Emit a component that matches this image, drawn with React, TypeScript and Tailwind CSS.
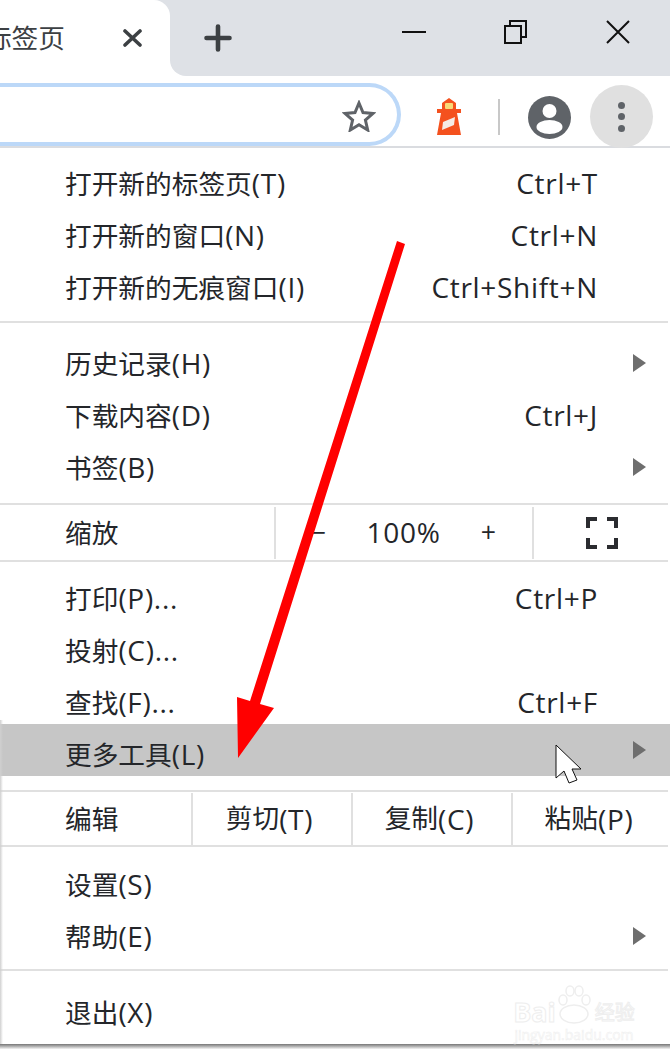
const FONT = "font-['Open_Sans','Noto_Sans_CJK_SC',sans-serif]";

function Divider() {
  return <div className="h-[2px] w-[668px] bg-[#e0e0e0]" />;
}

// latin runs sit a little larger than the CJK glyphs in this menu font
function Mixed({ text }: { text: string }) {
  return (
    <>
      {text.split(/([\x00-\x7f]+)/).map((part, i) =>
        /^[\x00-\x7f]+$/.test(part) ? (
          <span key={i} className="text-[28px] tracking-[0.7px]">
            {part}
          </span>
        ) : (
          <span key={i}>{part}</span>
        )
      )}
    </>
  );
}

function Triangle() {
  return (
    <svg width="13" height="18" viewBox="0 0 13 18" aria-hidden>
      <path d="M0 0 L13 9 L0 18 Z" fill="#6e6e6e" />
    </svg>
  );
}

function MenuRow({ label, shortcut, sub }: { label: string; shortcut?: string; sub?: boolean }) {
  return (
    <div className="flex h-[52px] items-center justify-between pl-[65px]">
      <span>
        <Mixed text={label} />
      </span>
      {shortcut && (
        <span className="pr-[72px]">
          <Mixed text={shortcut} />
        </span>
      )}
      {sub && (
        <span className="pr-[24px]">
          <Triangle />
        </span>
      )}
    </div>
  );
}

function Lighthouse() {
  return (
    <svg width="26" height="38" viewBox="0 0 26 38" aria-hidden>
      <path d="M13 0 L20 5 L20 11 L25 11 L25 15 L21 15 L25 37 L1 37 L5 15 L1 15 L1 11 L6 11 L6 5 Z" fill="#f4511e" />
      <rect x="9" y="5" width="8" height="6" rx="1" fill="#f9d976" />
      <path d="M7 24 L19 19 L18 27 L6 32 Z" fill="#f5ece6" />
    </svg>
  );
}

function Avatar() {
  return (
    <svg width="43" height="43" viewBox="0 0 43 43" aria-hidden>
      <circle cx="21.5" cy="21.5" r="21.5" fill="#5f6368" />
      <circle cx="21.5" cy="15" r="7" fill="#ffffff" />
      <ellipse cx="21.5" cy="31" rx="13" ry="7" fill="#ffffff" />
    </svg>
  );
}

function Star() {
  return (
    <svg width="34" height="32" viewBox="0 0 34 32" aria-hidden>
      <path
        d="M17 3 L21 12.5 L31 13.4 L23.4 20 L25.7 30 L17 24.7 L8.3 30 L10.6 20 L3 13.4 L13 12.5 Z"
        fill="none"
        stroke="#5f6368"
        strokeWidth="3"
      />
    </svg>
  );
}

function FullscreenIcon() {
  return (
    <svg width="32" height="32" viewBox="0 0 32 32" aria-hidden>
      <path d="M0 11 V0 H11 V4 H4 V11 Z M21 0 H32 V11 H28 V4 H21 Z M0 21 H4 V28 H11 V32 H0 Z M28 21 H32 V32 H21 V28 H28 Z" fill="#2b2c30" />
    </svg>
  );
}

function WindowButtons() {
  return (
    <div className="flex pt-[19px]">
      <svg width="24" height="26" viewBox="0 0 24 26" className="ml-[170px]" aria-hidden>
        <path d="M0 13 H24" stroke="#111111" strokeWidth="2" />
      </svg>
      <svg width="24" height="26" viewBox="0 0 24 26" className="ml-[78px]" aria-hidden>
        <path d="M1 7 H17 V24 H1 Z M6 7 V2 H22 V18 H17" fill="none" stroke="#111111" strokeWidth="2" />
      </svg>
      <svg width="26" height="26" viewBox="0 0 26 26" className="ml-[77px]" aria-hidden>
        <path d="M2 2 L24 24 M24 2 L2 24" stroke="#111111" strokeWidth="2" />
      </svg>
    </div>
  );
}

function Watermark() {
  return (
    <div className="absolute left-[513px] top-[985px] flex w-[122px] flex-col items-center text-transparent [-webkit-text-stroke:1px_#eeeeee]">
      <div className="flex h-[40px] items-end leading-none">
        <span className="text-[27px] font-bold">Bai</span>
        <svg width="36" height="40" viewBox="0 0 36 40" aria-hidden>
          <g fill="none" stroke="#eeeeee" strokeWidth="1.5">
            <ellipse cx="7" cy="15" rx="4" ry="5" />
            <ellipse cx="14" cy="6" rx="4" ry="5" />
            <ellipse cx="23" cy="6" rx="4" ry="5" />
            <ellipse cx="30" cy="15" rx="4" ry="5" />
            <ellipse cx="18" cy="29" rx="14" ry="9" />
          </g>
        </svg>
        <span className="ml-[3px] text-[20px] leading-[24px]">经验</span>
      </div>
      <span className="mt-[1px] text-[14px] leading-[17px] [-webkit-text-stroke:0.5px_#eeeeee]">jingyan.baidu.com</span>
    </div>
  );
}

export default function App() {
  return (
    <div className={`relative h-[1057px] w-[670px] overflow-hidden bg-white text-[26.7px] leading-none text-[#24262a] ${FONT}`}>
      {/* tab strip */}
      <div className="flex h-[76px] bg-white">
        <div className="w-[170px] bg-[#dee1e6]">
          <div className="flex h-full items-center justify-end rounded-tr-[16px] bg-white pr-[28px]">
            <span className="mr-[58px] whitespace-nowrap text-[#3c4043]">新标签页</span>
            <svg width="19" height="18" viewBox="0 0 19 18" className="shrink-0" aria-hidden>
              <path d="M2 2 L17 16 M17 2 L2 16" stroke="#3c4043" strokeWidth="3.6" strokeLinecap="round" />
            </svg>
          </div>
        </div>
        <div className="flex flex-1 rounded-bl-[16px] bg-[#dee1e6]">
          <div className="flex w-[62px] items-center justify-end">
            <svg width="28" height="28" viewBox="0 0 28 28" aria-hidden>
              <path d="M14 2.5 V25.5 M2.5 14 H25.5" stroke="#3c4043" strokeWidth="4.6" strokeLinecap="round" />
            </svg>
          </div>
          <div className="flex-1">
            <WindowButtons />
          </div>
        </div>
      </div>

      {/* toolbar */}
      <div className="flex h-[72px] items-start border-b-2 border-[#dadce0]">
        <div className="mt-[7px] flex h-[63px] w-[401px] shrink-0 items-center justify-end rounded-r-[32px] border-y-[4px] border-r-[4px] border-[#bcd8f8] pr-[21px]">
          <span className="mt-[3px]">
            <Star />
          </span>
        </div>
        <div className="ml-[35px] mt-[22px]">
          <Lighthouse />
        </div>
        <div className="ml-[36px] mt-[23px] h-[36px] w-[2px] bg-[#c8c8c8]" />
        <div className="ml-[28px] mt-[20px]">
          <Avatar />
        </div>
        <div className="ml-[19px] mt-[9px] flex h-[63px] w-[63px] flex-col items-center justify-center gap-[4.5px] rounded-full bg-[#e0e0e0]">
          <span className="h-[7px] w-[7px] rounded-full bg-[#5f6368]" />
          <span className="h-[7px] w-[7px] rounded-full bg-[#5f6368]" />
          <span className="h-[7px] w-[7px] rounded-full bg-[#5f6368]" />
        </div>
      </div>

      {/* menu */}
      <div className="pt-[9px]">
        <MenuRow label="打开新的标签页(T)" shortcut="Ctrl+T" />
        <MenuRow label="打开新的窗口(N)" shortcut="Ctrl+N" />
        <MenuRow label="打开新的无痕窗口(I)" shortcut="Ctrl+Shift+N" />
        <div className="h-[8px]" />
        <Divider />
        <div className="h-[14px]" />
        <MenuRow label="历史记录(H)" sub />
        <MenuRow label="下载内容(D)" shortcut="Ctrl+J" />
        <MenuRow label="书签(B)" sub />
        <div className="h-[10px]" />
        <Divider />
        <div className="flex h-[55px] items-center">
          <span className="mt-[2px] w-[274px] pl-[65px]">缩放</span>
          <div className="flex h-[52px] w-[260px] items-center border-x-2 border-[#e0e0e0] text-center">
            <span className="w-[85px]">−</span>
            <span className="-mt-[2px] w-[85px] text-[28px] tracking-[0.7px]">100%</span>
            <span className="w-[85px]">+</span>
          </div>
          <div className="flex flex-1 justify-center pr-[1px]">
            <FullscreenIcon />
          </div>
        </div>
        <Divider />
        <div className="h-[10px]" />
        <MenuRow label="打印(P)..." shortcut="Ctrl+P" />
        <MenuRow label="投射(C)..." />
        <MenuRow label="查找(F)..." shortcut="Ctrl+F" />
        <div className="-mt-[4px] flex h-[52px] items-center justify-between bg-[#c6c6c6] pl-[65px] pt-[8px]">
          <span>
            <Mixed text="更多工具(L)" />
          </span>
          <span className="-mt-[8px] pr-[24px]">
            <Triangle />
          </span>
        </div>
        <div className="h-[14px]" />
        <Divider />
        <div className="flex h-[53px] items-center">
          <span className="mt-[1px] w-[191px] pl-[65px]">编辑</span>
          <div className="flex h-[52px] flex-1 items-center text-center">
            <span className="flex h-full w-[160px] items-center justify-center border-l-2 border-[#e0e0e0] pr-[5px]">
              <Mixed text="剪切(T)" />
            </span>
            <span className="flex h-full w-[160px] items-center justify-center border-l-2 border-[#e0e0e0] pr-[5px]">
              <Mixed text="复制(C)" />
            </span>
            <span className="flex h-full w-[159px] items-center justify-center border-l-2 border-[#e0e0e0] pr-[5px]">
              <Mixed text="粘贴(P)" />
            </span>
          </div>
        </div>
        <Divider />
        <div className="h-[11px]" />
        <MenuRow label="设置(S)" />
        <MenuRow label="帮助(E)" sub />
        <div className="h-[7px]" />
        <Divider />
        <div className="h-[15px]" />
        <MenuRow label="退出(X)" />
      </div>

      {/* left and bottom shadow of the menu */}
      <div className="absolute left-0 top-[720px] h-[324px] w-[3px] bg-gradient-to-r from-[#d0d0d0] to-transparent" />
      <div className="absolute left-0 top-[1044px] h-[5px] w-full bg-gradient-to-b from-[#777777] to-[#f4f4f4]" />

      <Watermark />

      {/* annotation arrow and cursor drawn over the screenshot */}
      <svg className="absolute left-0 top-0" width="670" height="1057" viewBox="0 0 670 1057" aria-hidden>
        <path d="M397 241 L405 244 L260 704 L274 708 L238 758 L237 697 L250 701 Z" fill="#ff0000" />
        <path
          d="M556 745 L581 769 L572 769 L577 780 L569 783 L564 771 L556 778 Z"
          fill="#ffffff"
          stroke="#111111"
          strokeWidth="1"
        />
      </svg>
    </div>
  );
}
